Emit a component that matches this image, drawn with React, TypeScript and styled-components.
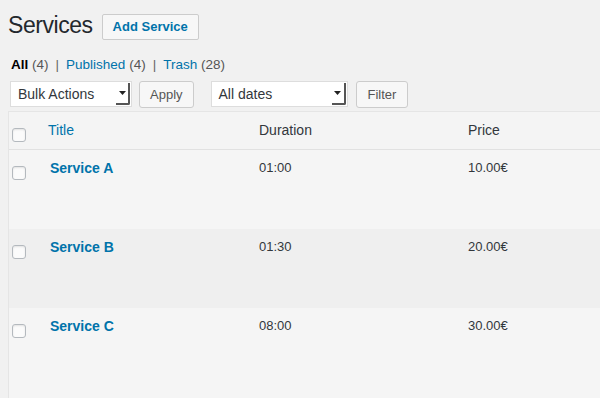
import React from 'react'
import styled, { createGlobalStyle } from 'styled-components'

const GlobalStyle = createGlobalStyle`
  html, body {
    margin: 0;
    padding: 0;
    background: #f1f1f1;
    overflow: hidden;
  }
  body {
    font-family: "Liberation Sans", Arial, sans-serif;
    font-size: 13px;
    color: #444;
  }
`

type Service = { id: string; name: string; duration: string; price: string }

const services: Service[] = [
  { id: 'a', name: 'Service A', duration: '01:00', price: '10.00€' },
  { id: 'b', name: 'Service B', duration: '01:30', price: '20.00€' },
  { id: 'c', name: 'Service C', duration: '08:00', price: '30.00€' },
]

const views = [
  { label: 'All', count: 4, current: true },
  { label: 'Published', count: 4 },
  { label: 'Trash', count: 28 },
]

function SelectArrow() {
  return (
    <ArrowBox>
      <svg width="7" height="4" viewBox="0 0 7 4">
        <path d="M0 0h7L3.5 4z" fill="#222" />
      </svg>
    </ArrowBox>
  )
}

export default function App() {
  return (
    <>
      <GlobalStyle />
      <Wrap>
        <TitleRow>
          <Heading>Services</Heading>
          <PageAction>Add Service</PageAction>
        </TitleRow>

        <Views>
          {views.map((v, i) => (
            <React.Fragment key={v.label}>
              {i > 0 && <Sep>|</Sep>}
              <ViewLink $current={v.current}>
                {v.label} <Count>({v.count})</Count>
              </ViewLink>
            </React.Fragment>
          ))}
        </Views>

        <Toolbar>
          <Select $width={122}>
            Bulk Actions
            <SelectArrow />
          </Select>
          <Button>Apply</Button>
          <Select $width={137} $gap={17}>
            All dates
            <SelectArrow />
          </Select>
          <Button $gap={8} $pad={11}>Filter</Button>
        </Toolbar>

        <Table>
          <HeadRow>
            <CheckCell>
              <Checkbox />
            </CheckCell>
            <HeadCell $link>Title</HeadCell>
            <HeadCell>Duration</HeadCell>
            <HeadCell>Price</HeadCell>
          </HeadRow>
          {services.map((s, i) => (
            <Row key={s.id} $alt={i % 2 === 1}>
              <CheckCell>
                <Checkbox />
              </CheckCell>
              <TitleCell>{s.name}</TitleCell>
              <Cell>{s.duration}</Cell>
              <Cell>{s.price}</Cell>
            </Row>
          ))}
        </Table>
      </Wrap>
    </>
  )
}

const Wrap = styled.div`
  box-sizing: border-box;
  height: 100vh;
  display: flex;
  flex-direction: column;
  padding: 10px 0 0 8px;
`

const TitleRow = styled.div`
  display: flex;
  align-items: center;
  height: 31px;
`

const Heading = styled.h1`
  margin: 0 9px 0 0;
  font-size: 23px;
  font-weight: 400;
  line-height: 29px;
  color: #23282d;
  letter-spacing: -0.45px;
`

const PageAction = styled.button`
  height: 26px;
  padding: 0 10px;
  margin-top: 2px;
  border: 1px solid #ccc;
  border-radius: 2px;
  background: #f7f7f7;
  color: #0073aa;
  font-family: inherit;
  font-size: 13px;
  font-weight: 700;
`

const Views = styled.div`
  display: flex;
  align-items: center;
  margin-top: 13px;
  padding-left: 3px;
  height: 20px;
  font-size: 13.5px;
`

const ViewLink = styled.span<{ $current?: boolean }>`
  color: ${p => (p.$current ? '#000' : '#0073aa')};
  font-weight: ${p => (p.$current ? 600 : 400)};
  white-space: pre;
`

const Count = styled.span`
  color: #555;
  font-weight: 400;
`

const Sep = styled.span`
  color: #666;
  padding: 0 7px;
`

const Toolbar = styled.div`
  display: flex;
  align-items: center;
  margin-top: 6px;
  height: 28px;
  padding-left: 2px;
`

const Select = styled.div<{ $width: number; $gap?: number }>`
  position: relative;
  box-sizing: border-box;
  width: ${p => p.$width}px;
  height: 26px;
  margin-left: ${p => p.$gap || 0}px;
  padding: 0 7px;
  display: flex;
  align-items: center;
  border: 1px solid #ddd;
  background: #fff;
  color: #32373c;
  font-size: 14px;
`

const ArrowBox = styled.span`
  position: absolute;
  right: 1px;
  top: 1px;
  bottom: 1px;
  width: 12px;
  display: flex;
  align-items: center;
  justify-content: center;
  border-right: 2px solid #555;
  border-bottom: 2px solid #555;
  border-radius: 0 0 2px 0;
`

const Button = styled.button<{ $gap?: number; $pad?: number }>`
  box-sizing: border-box;
  height: 27px;
  margin-left: ${p => p.$gap ?? 7}px;
  padding: 0 ${p => p.$pad ?? 10}px;
  border: 1px solid #ccc;
  border-radius: 3px;
  background: #f7f7f7;
  color: #555;
  font-family: inherit;
  font-size: 13px;
`

const Table = styled.div`
  flex: 1;
  margin-top: 3px;
  width: 720px;
  border-top: 1px solid #e5e5e5;
  border-left: 1px solid #e5e5e5;
  background: #f5f5f5;
`

const columns = `
  display: grid;
  grid-template-columns: 31px 211px 209px 1fr;
`

const HeadRow = styled.div`
  ${columns};
  height: 37px;
  border-bottom: 1px solid #e1e1e1;
  background: #f4f4f4;
`

const Row = styled.div<{ $alt?: boolean }>`
  ${columns};
  height: 79px;
  background: ${p => (p.$alt ? '#efefef' : '#f5f5f5')};
`

const CheckCell = styled.div`
  padding: 16px 0 0 3px;
`

const Checkbox = styled.span`
  display: block;
  box-sizing: border-box;
  width: 14px;
  height: 14px;
  border: 1px solid #b4b9be;
  border-radius: 3px;
  background: #fbfbfb;
  box-shadow: inset 0 1px 2px rgba(0, 0, 0, 0.1);
`

const HeadCell = styled.div<{ $link?: boolean }>`
  padding: 8px 8px 0;
  line-height: 20px;
  font-size: 14px;
  color: ${p => (p.$link ? '#0073aa' : '#32373c')};
`

const TitleCell = styled.div`
  padding: 8px 10px 0;
  line-height: 20px;
  font-size: 14px;
  font-weight: 700;
  color: #0073aa;
`

const Cell = styled.div`
  padding: 8px 8px 0;
  line-height: 20px;
  font-size: 13px;
  color: #32373c;
`
